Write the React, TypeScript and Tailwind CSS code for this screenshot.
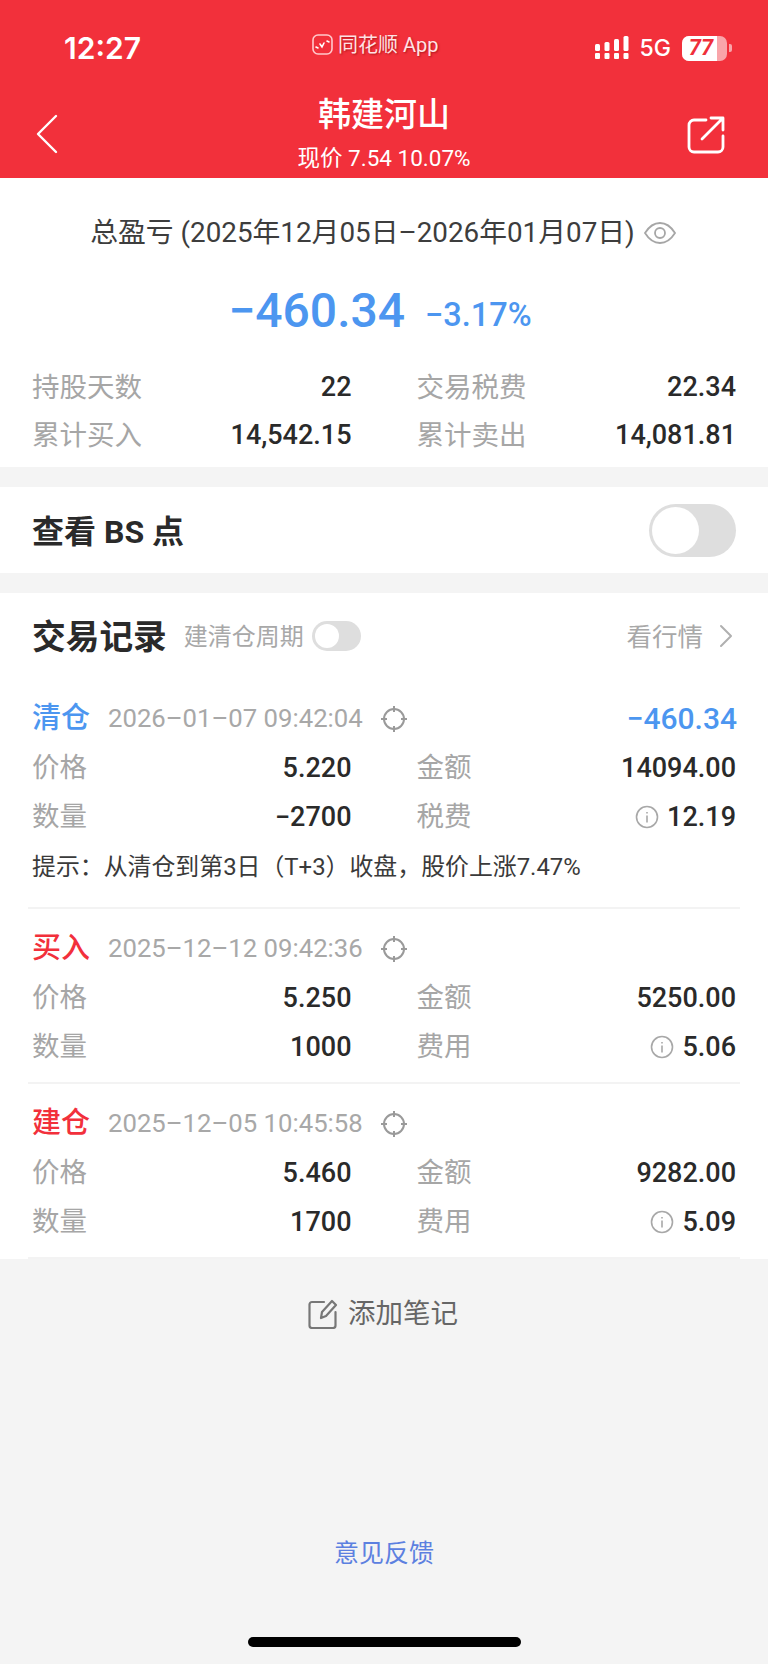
import React from "react";

function TargetIcon() {
  return (
    <svg width="28" height="28" viewBox="0 0 28 28" fill="none" stroke="#9a9a9a" strokeWidth="2" className="shrink-0">
      <circle cx="14" cy="14" r="10" />
      <path d="M14 1v6M14 21v6M1 14h6M21 14h6" />
    </svg>
  );
}

function InfoIcon() {
  return (
    <svg width="24" height="24" viewBox="0 0 24 24" fill="none" stroke="#a8a8a8" strokeWidth="1.6" className="shrink-0">
      <circle cx="12" cy="12" r="10.5" />
      <path d="M12 7v1.6M12 10.5v7" />
    </svg>
  );
}

function Pair({ label, value, info }: { label: string; value: string; info?: boolean }) {
  return (
    <div className="flex h-[49px] items-center justify-between pt-[3px]">
      <span className="text-[27.500px] text-[#a6a6a6]">{label}</span>
      <span className="flex items-center gap-[8px] text-[27px] font-medium text-[#2a2a2a]">
        {info && <InfoIcon />}
        {value}
      </span>
    </div>
  );
}

type RecordProps = {
  kind: string;
  color: string;
  time: string;
  pnl?: string;
  price: string;
  amount: string;
  qty: string;
  feeLabel: string;
  fee: string;
  tip?: string;
};

function TradeRecord({ kind, color, time, pnl, price, amount, qty, feeLabel, fee, tip }: RecordProps) {
  return (
    <div className={tip ? "px-8 pt-[13px] pb-[13px]" : "px-8 pt-[13px] pb-[12px]"}>
      <div className="flex h-[50px] items-center pt-[3px]">
        <span className={`text-[29px] font-medium ${color}`}>{kind}</span>
        <span className="ml-[18px] text-[25.700px] text-[#a8a8a8]">{time}</span>
        <span className="ml-[17px] flex">
          <TargetIcon />
        </span>
        {pnl && <span className="ml-auto mr-[-1px] text-[30px] font-medium text-[#4c96f0]">{pnl}</span>}
      </div>
      <div className="grid grid-cols-2 gap-x-[65px]">
        <Pair label="价格" value={price} />
        <Pair label="金额" value={amount} />
        <Pair label="数量" value={qty} />
        <Pair label={feeLabel} value={fee} info />
      </div>
      {tip && <div className="flex h-[54px] items-center pt-[2px] text-[23.900px] text-[#3a3a3a]">{tip}</div>}
    </div>
  );
}

function Divider() {
  return <div className="mx-[28px] h-[2px] bg-[#f3f3f3]" />;
}

export default function App() {
  return (
    <div className="flex h-[1664px] w-[768px] flex-col overflow-hidden bg-[#f4f4f4] font-['Roboto','Noto_Sans_CJK_SC',sans-serif]">
      <header className="h-[178px] shrink-0 bg-[#f2303b] text-white">
        <div className="flex h-[92px] items-center pt-[4px]">
          <span className="ml-[64px] w-[199px] font-['Inter',sans-serif] text-[30px] font-semibold">12:27</span>
          <div className="ml-[49px] flex items-center gap-[5px] pb-[7px] text-[20px] text-[#ffe3e5] [text-shadow:1px_1px_2px_rgba(120,0,0,0.55)]">
            <svg width="21" height="21" viewBox="0 0 21 21" fill="none" className="shrink-0">
              <rect x="1" y="1" width="19" height="19" rx="5" stroke="#ffc9cc" strokeWidth="1.6" />
              <path d="M4 13l2 1M8 10l2 3 2-4M15 7l2 1" stroke="#fff" strokeWidth="1.6" strokeLinecap="round" />
            </svg>
            同花顺 App
          </div>
          <div className="ml-auto mr-[36px] flex items-center">
            <svg width="34" height="24" viewBox="0 0 34 24" fill="#fff" className="shrink-0">
              <rect x="0" y="17" width="5" height="6" rx="1" />
              <rect x="9.5" y="17" width="5" height="6" rx="1" />
              <rect x="19" y="17" width="5" height="6" rx="1" />
              <rect x="28.5" y="17" width="5" height="6" rx="1" />
              <rect x="0" y="8" width="5" height="7" rx="1.5" />
              <rect x="9.5" y="6" width="5" height="9" rx="1.5" />
              <rect x="19" y="3" width="5" height="12" rx="1.5" />
              <rect x="28.5" y="0" width="5" height="15" rx="1.5" />
            </svg>
            <span className="ml-[11px] font-['Inter',sans-serif] text-[23px] font-medium">5G</span>
            <div className="relative ml-[11px] h-[25px] w-[45px] overflow-hidden rounded-[7px] bg-[#f9a5aa]">
              <div className="flex h-full w-[35px] items-center justify-center bg-white pl-[3px] text-[22px] font-bold italic leading-none text-[#ef2f3a]">
                77
              </div>
            </div>
            <div className="ml-[2px] h-[8px] w-[3px] rounded-r-[2px] bg-[#f9a5aa]" />
          </div>
        </div>
        <div className="relative flex h-[86px] flex-col items-center">
          <div className="absolute left-[36px] top-[22px]">
            <svg width="22" height="40" viewBox="0 0 22 40" fill="none" stroke="#fff" strokeWidth="2.4" strokeLinecap="round" strokeLinejoin="round">
              <path d="M20 2L2 20l18 18" />
            </svg>
          </div>
          <div className="text-[33px] font-medium leading-[46px]">韩建河山</div>
          <div className="text-[22.500px] leading-[40px]">现价 7.54 10.07%</div>
          <div className="absolute right-[43px] top-[24px]">
            <svg width="38" height="38" viewBox="0 0 38 38" fill="none" stroke="#fff" strokeWidth="2.8" strokeLinecap="round" strokeLinejoin="round">
              <path d="M19 4H7a5 5 0 0 0-5 5v22a5 5 0 0 0 5 5h24a5 5 0 0 0 5-5V20" />
              <path d="M15 23L36 2M24 2h12v12" />
            </svg>
          </div>
        </div>
      </header>

      <section className="h-[289px] shrink-0 bg-white px-8 pt-[38px]">
        <div className="flex h-8 items-center justify-center whitespace-nowrap pt-[2px] pr-[2px] text-[27.800px] text-[#3d3d3d]">
          <span className="ml-[1px]">总盈亏 (2025年12月05日–2026年01月07日)</span>
          <svg width="34" height="24" viewBox="0 0 34 24" fill="none" stroke="#a6a6a6" strokeWidth="1.8" className="ml-[8px] shrink-0">
            <path d="M2 12C7 4 12 2 17 2s10 2 15 10c-5 8-10 10-15 10S7 20 2 12z" />
            <circle cx="17" cy="12" r="5" />
          </svg>
        </div>
        <div className="mt-[32px] flex h-[60px] items-center justify-center gap-[20px] pt-[2px] pr-[8px] text-[#4c96f0]">
          <span className="text-[48px] font-medium">−460.34</span>
          <span className="mt-[8px] text-[32.500px] font-medium">−3.17%</span>
        </div>
        <div className="mt-[22px] grid grid-cols-2 gap-x-[65px]">
          {[
            ["持股天数", "22"],
            ["交易税费", "22.34"],
            ["累计买入", "14,542.15"],
            ["累计卖出", "14,081.81"],
          ].map(([label, value]) => (
            <div key={label} className="flex h-[48px] items-center justify-between pt-[3px]">
              <span className="text-[27.500px] text-[#a6a6a6]">{label}</span>
              <span className="text-[27px] font-medium text-[#2a2a2a]">{value}</span>
            </div>
          ))}
        </div>
      </section>

      <section className="mt-[20px] flex h-[86px] shrink-0 items-center justify-between bg-white px-8">
        <span className="pt-[4px] text-[32px] font-bold text-[#2a2a2a]">查看 BS 点</span>
        <div className="flex h-[53px] w-[87px] items-center rounded-full bg-[#dedede] p-[3px]">
          <div className="h-[47px] w-[47px] rounded-full bg-white" />
        </div>
      </section>

      <section className="mt-[20px] shrink-0 bg-white">
        <div className="flex h-[86px] items-center px-8">
          <span className="pt-[4px] text-[33.700px] font-bold text-[#2a2a2a]">交易记录</span>
          <span className="ml-[17px] pt-[2px] text-[24px] text-[#a8a8a8]">建清仓周期</span>
          <div className="ml-[8px] flex h-[30px] w-[49px] items-center rounded-full bg-[#dedede] p-[3px]">
            <div className="h-[24px] w-[24px] rounded-full bg-white" />
          </div>
          <span className="ml-auto pt-[2px] text-[25.500px] text-[#a8a8a8]">看行情</span>
          <svg width="14" height="24" viewBox="0 0 14 24" fill="none" stroke="#b0b0b0" strokeWidth="2" strokeLinecap="round" strokeLinejoin="round" className="ml-[16px] mr-[3px] shrink-0">
            <path d="M2 2l10 10L2 22" />
          </svg>
        </div>
        <TradeRecord
          kind="清仓"
          color="text-[#4c96f0]"
          time="2026–01–07 09:42:04"
          pnl="−460.34"
          price="5.220"
          amount="14094.00"
          qty="−2700"
          feeLabel="税费"
          fee="12.19"
          tip="提示：从清仓到第3日（T+3）收盘，股价上涨7.47%"
        />
        <Divider />
        <TradeRecord
          kind="买入"
          color="text-[#f2303b]"
          time="2025–12–12 09:42:36"
          price="5.250"
          amount="5250.00"
          qty="1000"
          feeLabel="费用"
          fee="5.06"
        />
        <Divider />
        <TradeRecord
          kind="建仓"
          color="text-[#f2303b]"
          time="2025–12–05 10:45:58"
          price="5.460"
          amount="9282.00"
          qty="1700"
          feeLabel="费用"
          fee="5.09"
        />
        <Divider />
      </section>

      <div className="mt-[34px] flex h-10 shrink-0 items-center justify-center gap-[10px] pt-[2px] pr-[2px] text-[27.500px] text-[#666666]">
        <svg width="30" height="30" viewBox="0 0 30 30" fill="none" stroke="#777777" strokeWidth="2.2" strokeLinecap="round" strokeLinejoin="round" className="shrink-0">
          <path d="M16 3H4a2.500 2.500 0 0 0-2.500 2.500v21A2.500 2.500 0 0 0 4 29h21a2.500 2.500 0 0 0 2.500-2.500V13" />
          <path d="M13 19l1-6L24 2l4 4-10 11z" />
        </svg>
        添加笔记
      </div>

      <div className="mt-[199px] flex h-10 shrink-0 items-center justify-center pt-[3px] text-[25px] text-[#5c80e0]">
        意见反馈
      </div>

      <div className="mx-auto mt-[65px] h-[10px] w-[273px] shrink-0 rounded-full bg-black" />
    </div>
  );
}
